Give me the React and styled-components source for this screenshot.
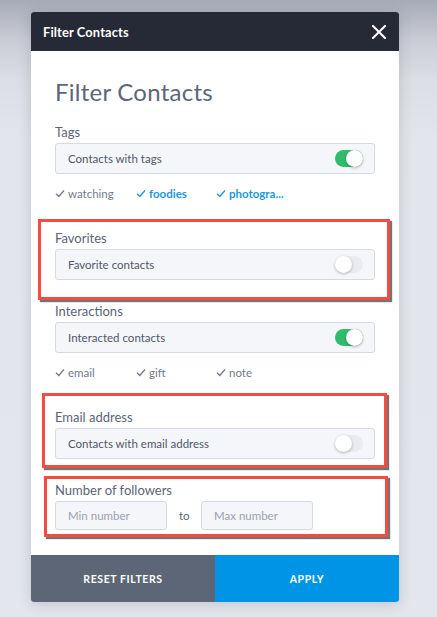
import React from "react";
import styled, { createGlobalStyle } from "styled-components";

const Global = createGlobalStyle`
  html, body { margin: 0; padding: 0; }
  body {
    width: 437px;
    height: 617px;
    overflow: hidden;
    font-family: Lato, "Open Sans", "Liberation Sans", sans-serif;
    background: linear-gradient(180deg, #a6aab6 0px, #c9ccd6 40px, #dcdee6 80px, #e3e5ec 140px, #e4e6ed 100%);
  }
`;

const Page = styled.div`
  padding: 12px 38px 15px 31px;
  height: 617px;
  box-sizing: border-box;
`;

const Card = styled.div`
  width: 368px;
  background: #fff;
  border-radius: 3px;
  overflow: hidden;
  box-shadow: 0 2px 14px rgba(40, 46, 60, 0.18);
  display: flex;
  flex-direction: column;
`;

const Header = styled.div`
  height: 39px;
  background: #252a36;
  display: flex;
  align-items: center;
  justify-content: space-between;
  padding: 0 12px 0 12px;
  box-sizing: border-box;
`;

const HeaderTitle = styled.div`
  color: #fff;
  font-weight: 700;
  font-size: 12.8px;
  letter-spacing: 0.15px;
`;

const CloseBtn = styled.button`
  border: 0;
  background: transparent;
  padding: 0;
  width: 16px;
  height: 16px;
  display: flex;
  align-items: center;
  justify-content: center;
  cursor: pointer;
`;

const Body = styled.div`
  padding: 26px 24px 25px 24px;
  display: flex;
  flex-direction: column;
`;

const Heading = styled.h1`
  margin: 0 0 17px 0;
  font-size: 24px;
  line-height: 30px;
  font-weight: 400;
  letter-spacing: 0.25px;
  color: #5d6678;
`;

const Sections = styled.div`
  display: flex;
  flex-direction: column;
  gap: 23px;
`;

const Section = styled.div`
  position: relative;
  display: flex;
  flex-direction: column;
`;

const Label = styled.div`
  font-size: 13px;
  line-height: 16px;
  color: #5b6477;
  margin-bottom: 3px;
`;

const Field = styled.div`
  height: 31px;
  box-sizing: border-box;
  background: #f5f6fa;
  border: 1px solid #d5d9e1;
  border-radius: 3px;
  display: flex;
  align-items: center;
  justify-content: space-between;
  padding: 0 11px 0 12px;
  font-size: 11.5px;
  color: #4f5668;
`;

const Track = styled.div`
  width: 28px;
  height: 17px;
  border-radius: 9px;
  background: ${(p) => (p.$on ? "#2ebd6b" : "#e9ebf0")};
  position: relative;
`;

const Knob = styled.div`
  position: absolute;
  top: 0;
  left: ${(p) => (p.$on ? "11px" : "0")};
  width: 17px;
  height: 17px;
  border-radius: 50%;
  background: #fff;
  box-shadow: 0 1px 3px rgba(0, 0, 0, 0.28);
`;

const Chips = styled.div`
  display: grid;
  grid-template-columns: 81px 80px 1fr;
  margin: 11px 0 6px 0;
  height: 16px;
  align-items: center;
`;

const Chip = styled.div`
  display: flex;
  align-items: center;
  gap: 3px;
  font-size: 11.5px;
  color: ${(p) => (p.$active ? "#1a98e3" : "#727a8b")};
  font-weight: ${(p) => (p.$active ? 700 : 400)};
  white-space: nowrap;
`;

const RangeRow = styled.div`
  display: flex;
  align-items: center;
`;

const NumInput = styled.input`
  width: 112px;
  height: 29px;
  box-sizing: border-box;
  background: #f5f6fa;
  border: 1px solid #d5d9e1;
  border-radius: 3px;
  padding: 0 12px;
  font-family: inherit;
  font-size: 11.5px;
  color: #4f5668;
  outline: none;
  &::placeholder { color: #9aa1ae; }
`;

const To = styled.span`
  font-size: 11.5px;
  color: #5b6477;
  width: 34px;
  padding-left: 12px;
  box-sizing: border-box;
`;

const Highlight = styled.div`
  position: absolute;
  top: ${(p) => p.$t}px;
  left: ${(p) => p.$l}px;
  right: ${(p) => p.$r}px;
  bottom: ${(p) => p.$b}px;
  border: 3px solid #f44b42;
  box-shadow: 2px 2px 1px rgba(70, 70, 70, 0.75);
  pointer-events: none;
`;

const Footer = styled.div`
  display: grid;
  grid-template-columns: 184px 1fr;
  height: 47px;
`;

const FooterBtn = styled.button`
  border: 0;
  margin: 0;
  background: ${(p) => (p.$primary ? "#0094e7" : "#5d6677")};
  color: #fff;
  font-family: Lato, "Open Sans", sans-serif;
  font-weight: 700;
  font-size: 10.5px;
  letter-spacing: 0.6px;
  text-transform: uppercase;
  cursor: pointer;
`;

const Check = () => (
  <svg width="10" height="9" viewBox="0 0 10 9">
    <polyline points="1,4.8 3.8,7.5 9,1.5" fill="none" stroke="currentColor" strokeWidth="1.3" />
  </svg>
);

const Toggle = ({ on }) => (
  <Track $on={on}>
    <Knob $on={on} />
  </Track>
);

const ChipRow = ({ items }) => (
  <Chips>
    {items.map((it) => (
      <Chip key={it.label} $active={it.active}>
        <Check />
        {it.label}
      </Chip>
    ))}
  </Chips>
);

export default function App() {
  return (
    <Page>
      <Global />
      <Card>
        <Header>
          <HeaderTitle>Filter Contacts</HeaderTitle>
          <CloseBtn aria-label="Close">
            <svg width="14" height="14" viewBox="0 0 14 14">
              <path d="M1 1L13 13M13 1L1 13" stroke="#fff" strokeWidth="2" strokeLinecap="square" />
            </svg>
          </CloseBtn>
        </Header>
        <Body>
          <Heading>Filter Contacts</Heading>
          <Sections>
            <Section>
              <Label>Tags</Label>
              <Field>
                Contacts with tags
                <Toggle on />
              </Field>
              <ChipRow
                items={[
                  { label: "watching" },
                  { label: "foodies", active: true },
                  { label: "photogra...", active: true },
                ]}
              />
            </Section>
            <Section>
              <Label>Favorites</Label>
              <Field>
                Favorite contacts
                <Toggle />
              </Field>
              <Highlight $t={-11} $l={-17} $r={-15} $b={-20} />
            </Section>
            <Section>
              <Label>Interactions</Label>
              <Field>
                Interacted contacts
                <Toggle on />
              </Field>
              <ChipRow items={[{ label: "email" }, { label: "gift" }, { label: "note" }]} />
            </Section>
            <Section>
              <Label>Email address</Label>
              <Field>
                Contacts with email address
                <Toggle />
              </Field>
              <Highlight $t={-16} $l={-13} $r={-12} $b={-9} />
            </Section>
            <Section>
              <Label>Number of followers</Label>
              <RangeRow>
                <NumInput placeholder="Min number" />
                <To>to</To>
                <NumInput placeholder="Max number" />
              </RangeRow>
              <Highlight $t={-6} $l={-11} $r={-13} $b={-7} />
            </Section>
          </Sections>
        </Body>
        <Footer>
          <FooterBtn>Reset filters</FooterBtn>
          <FooterBtn $primary>Apply</FooterBtn>
        </Footer>
      </Card>
    </Page>
  );
}
